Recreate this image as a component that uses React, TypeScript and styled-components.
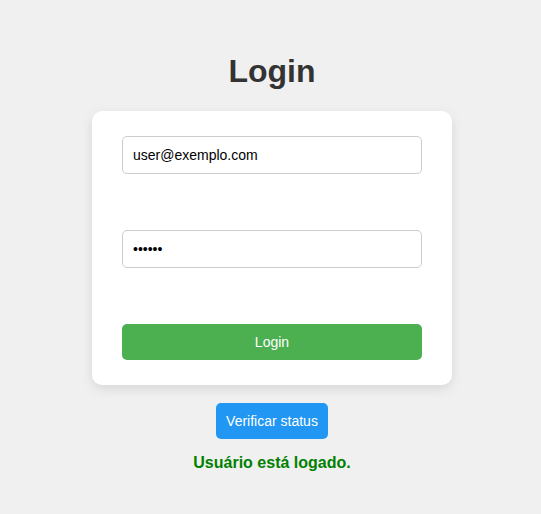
import styled, { createGlobalStyle } from "styled-components";

const GlobalStyle = createGlobalStyle`
  body {
    margin: 0;
    background: #f0f0f0;
    font-family: "Liberation Sans", Arial, sans-serif;
  }
`;

const Page = styled.div`
  display: flex;
  flex-direction: column;
  align-items: center;
  padding: 52px 0 0 3px;
`;

const Title = styled.h1`
  margin: 0 0 20px;
  font-size: 32px;
  line-height: 39px;
  font-weight: bold;
  color: #333;
`;

const Card = styled.form`
  width: 300px;
  padding: 25px 30px;
  background: #fff;
  border-radius: 10px;
  box-shadow: 0 4px 12px rgba(0, 0, 0, 0.1);
  display: flex;
  flex-direction: column;
  gap: 56px;
`;

const Input = styled.input`
  box-sizing: border-box;
  width: 100%;
  height: 38px;
  padding: 0 10px;
  border: 1px solid #ccc;
  border-radius: 5px;
  font-family: "Liberation Sans", Arial, sans-serif;
  font-size: 14px;
  color: #000;
  outline: none;
`;

const Button = styled.button<{ $color: string; $full?: boolean }>`
  box-sizing: border-box;
  width: ${(p) => (p.$full ? "100%" : "auto")};
  height: 36px;
  padding: 0 10px;
  border: none;
  border-radius: 5px;
  background: ${(p) => p.$color};
  color: #fff;
  font-family: "Liberation Sans", Arial, sans-serif;
  font-size: 14px;
  cursor: pointer;
`;

const StatusArea = styled.div`
  margin-top: 18px;
  display: flex;
  flex-direction: column;
  align-items: center;
`;

const StatusText = styled.p`
  margin: 15px 0 0;
  font-size: 16px;
  line-height: 18px;
  font-weight: bold;
  color: green;
`;

export default function App() {
  return (
    <>
      <GlobalStyle />
      <Page>
        <Title>Login</Title>
        <Card onSubmit={(e) => e.preventDefault()}>
          <Input type="email" defaultValue="user@exemplo.com" />
          <Input type="password" defaultValue="123456" />
          <Button type="submit" $color="#4caf50" $full>
            Login
          </Button>
        </Card>
        <StatusArea>
          <Button type="button" $color="#2196f3">
            Verificar status
          </Button>
          <StatusText>Usuário está logado.</StatusText>
        </StatusArea>
      </Page>
    </>
  );
}
